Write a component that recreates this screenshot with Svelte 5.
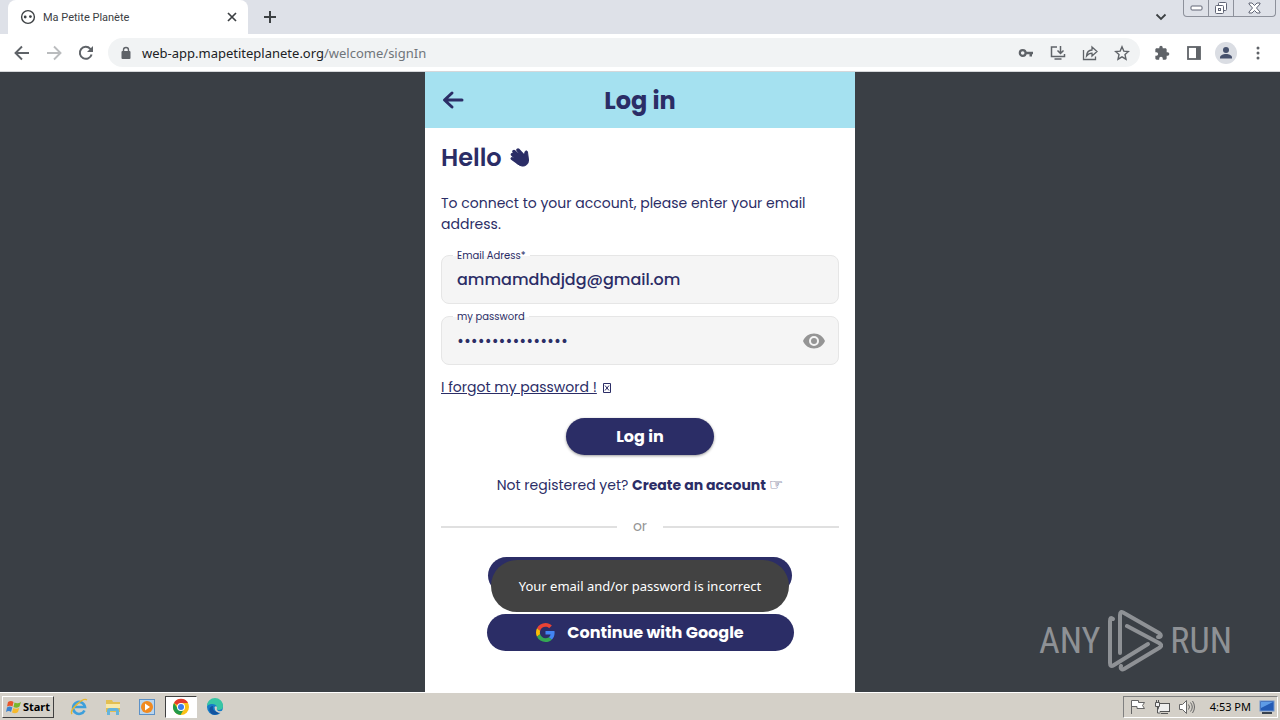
<script lang="ts">
    let email = $state("ammamdhdjdg@gmail.om");
    let password = $state("planetplanet2023");
    let showPassword = $state(false);
    let message = $state("Your email and/or password is incorrect");
</script>

<div class="screen">
    <header class="browser">
        <div class="tabs">
            <div class="tab">
                <svg width="16" height="16" viewBox="0 0 16 16">
                    <circle cx="8" cy="8" r="6.4" fill="#fff" stroke="#3c4043" stroke-width="1.4" />
                    <circle cx="5.2" cy="8" r="1.4" fill="#3c4043" />
                    <circle cx="10.4" cy="7.6" r="1.4" fill="#3c4043" />
                </svg>
                <span class="tab-title">Ma Petite Planète</span>
                <button aria-label="Close tab">
                    <svg width="10" height="10" viewBox="0 0 10 10" stroke="#3c4043" stroke-width="1.7">
                        <path d="M1 1l8 8M9 1l-8 8" />
                    </svg>
                </button>
            </div>
            <button class="new-tab" aria-label="New tab">
                <svg width="12" height="12" viewBox="0 0 12 12" stroke="#3c4043" stroke-width="2">
                    <path d="M6 0v12M0 6h12" />
                </svg>
            </button>
            <button class="tab-search" aria-label="Search tabs">
                <svg width="12" height="8" viewBox="0 0 12 8" fill="none" stroke="#3c4043" stroke-width="1.8">
                    <path d="M1.5 1.5L6 6l4.5-4.5" />
                </svg>
            </button>
            <div class="window-buttons">
                <button aria-label="Minimize">
                    <svg width="13" height="6" viewBox="0 0 13 6" fill="#fff" stroke="#606575">
                        <rect x="1" y="1" width="11" height="4" rx="1" />
                    </svg>
                </button>
                <button aria-label="Restore">
                    <svg width="14" height="13" viewBox="0 0 14 13" fill="#fff" stroke="#606575">
                        <rect x="4.5" y="0.5" width="8" height="8" rx="1" />
                        <rect x="1.5" y="3.5" width="8" height="8" rx="1" />
                        <rect x="4.5" y="6.5" width="2" height="2" />
                    </svg>
                </button>
                <button class="close" aria-label="Close">
                    <svg width="13" height="12" viewBox="0 0 13 12" fill="#fff" stroke="#606575">
                        <path d="M1 1h3l2.5 2.5L9 1h3v1L8.5 6l3.5 4v1H9L6.5 8.5 4 11H1v-1l3.5-4L1 2z" />
                    </svg>
                </button>
            </div>
        </div>

        <nav class="toolbar">
            <button aria-label="Back">
                <svg width="16" height="16" viewBox="0 0 16 16" fill="none" stroke="#5f6368" stroke-width="1.9">
                    <path d="M15 8H2M8 1.5L1.5 8 8 14.5" />
                </svg>
            </button>
            <button aria-label="Forward">
                <svg width="16" height="16" viewBox="0 0 16 16" fill="none" stroke="#babcbe" stroke-width="1.9">
                    <path d="M1 8h13M8 1.5L14.5 8 8 14.5" />
                </svg>
            </button>
            <button aria-label="Reload">
                <svg width="16" height="16" viewBox="0 0 16 16">
                    <path d="M13.6 9.5A6 6 0 1 1 12.3 3.8L14 5.5" fill="none" stroke="#5f6368" stroke-width="2" />
                    <path d="M15 1v6H9z" fill="#5f6368" />
                </svg>
            </button>
            <div class="address">
                <svg width="12" height="14" viewBox="0 0 12 14">
                    <rect x="1.5" y="5" width="9" height="8" rx="1" fill="#5f6368" />
                    <path d="M3.5 5.5V4a2.5 2.5 0 0 1 5 0v1.5" fill="none" stroke="#5f6368" stroke-width="1.4" />
                </svg>
                <span class="url">web-app.mapetiteplanete.org<span>/welcome/signIn</span></span>
                <button aria-label="Saved passwords">
                    <svg width="16" height="16" viewBox="0 0 16 16">
                        <circle cx="4.7" cy="8" r="2.9" fill="none" stroke="#5f6368" stroke-width="2.2" />
                        <path d="M7 6.8h8v2.4h-1v2.3h-2.5V9.200H7z" fill="#5f6368" />
                    </svg>
                </button>
                <button aria-label="Install app">
                    <svg width="16" height="16" viewBox="0 0 16 16" fill="none" stroke="#5f6368" stroke-width="1.5">
                        <path d="M7 2H1.5v9.5h13V9M4.5 14h7M10.5 1v7M7.5 5.5l3 3 3-3" />
                    </svg>
                </button>
                <button aria-label="Share">
                    <svg width="16" height="16" viewBox="0 0 16 16" fill="none" stroke="#5f6368" stroke-width="1.3">
                        <path d="M1.5 5v9.500h12v-3" />
                        <path d="M4.5 11c.3-4 2.2-5.8 5.5-6V2l5 4.5-5 4.5V8.200c-2.500 0-4 .8-5.500 2.800z" />
                    </svg>
                </button>
                <button aria-label="Bookmark">
                    <svg width="16" height="16" viewBox="0 0 16 16" fill="none" stroke="#5f6368" stroke-width="1.4">
                        <path d="M8 1.800l1.800 4.300 4.700.4-3.500 3.100 1 4.600L8 11.800l-4 2.400 1-4.600-3.500-3.100 4.700-.4z" />
                    </svg>
                </button>
            </div>
            <button aria-label="Extensions">
                <svg width="16" height="16" viewBox="0 0 24 24" fill="#5f6368">
                    <path d="M20.5 11H19V7c0-1.100-.9-2-2-2h-4V3.500a2.500 2.500 0 0 0-5 0V5H4c-1.100 0-2 .9-2 2v3.800h1.500a2.700 2.700 0 0 1 0 5.400H2V20c0 1.100.9 2 2 2h3.800v-1.500a2.700 2.700 0 0 1 5.400 0V22H17c1.100 0 2-.9 2-2v-4h1.500a2.500 2.500 0 0 0 0-5z" />
                </svg>
            </button>
            <button aria-label="Side panel">
                <svg width="14" height="14" viewBox="0 0 14 14">
                    <rect x="1" y="1" width="12" height="12" fill="#fff" stroke="#5f6368" stroke-width="1.8" />
                    <rect x="9" y="1" width="4" height="12" fill="#5f6368" />
                </svg>
            </button>
            <button aria-label="Profile">
                <svg width="22" height="22" viewBox="0 0 22 22">
                    <circle cx="11" cy="11" r="11" fill="#dadde3" />
                    <circle cx="11" cy="8" r="3" fill="#46516d" />
                    <path d="M5 16.5v-1c0-2.200 3-3.500 6-3.500s6 1.300 6 3.500v1z" fill="#46516d" />
                </svg>
            </button>
            <button aria-label="Menu">
                <svg width="4" height="14" viewBox="0 0 4 14" fill="#5f6368">
                    <circle cx="2" cy="2" r="1.5" /><circle cx="2" cy="7" r="1.5" /><circle cx="2" cy="12" r="1.5" />
                </svg>
            </button>
        </nav>
    </header>

    <div class="backdrop">
        <main class="app">
            <header class="app-bar">
                <button aria-label="Go back">
                    <svg width="22" height="20" viewBox="0 0 22 20" fill="none" stroke="#2b2d66" stroke-width="3" stroke-linecap="round" stroke-linejoin="round">
                        <path d="M20 10H3M10 3l-7.500 7 7.500 7" />
                    </svg>
                </button>
                <h1>Log in</h1>
            </header>

            <form class="content" onsubmit={(e) => e.preventDefault()}>
                <h2>
                    Hello
                    <svg width="20" height="20" viewBox="0 0 20 20" fill="none" stroke="#2b2d66" stroke-linecap="round">
                        <path d="M2.500 6.500l6 6M4 3.500l8 8M8 2l7 7.500" stroke-width="3.500" />
                        <path d="M2 10.500l7 5" stroke-width="3" />
                        <path d="M8 5l6 4 1-5c.2-1.500 2.300-1.500 2.500 0l1 8c.2 4-3 6.500-6.500 6-3-.4-5-2.500-8-6z" fill="#2b2d66" stroke-width="1" />
                    </svg>
                </h2>
                <p class="intro">To connect to your account, please enter your email address.</p>

                <div class="field">
                    <label for="email">Email Adress*</label>
                    <input id="email" type="text" bind:value={email} />
                </div>
                <div class="field">
                    <label for="password">my password</label>
                    <input id="password" class:masked={!showPassword} type={showPassword ? "text" : "password"} bind:value={password} />
                    <button type="button" aria-label="Show password" onclick={() => (showPassword = !showPassword)}>
                        <svg width="24" height="24" viewBox="0 0 24 24" fill="#959595">
                            <path d="M12 4.500C7 4.500 2.730 7.610 1 12c1.730 4.390 6 7.500 11 7.500s9.270-3.110 11-7.500c-1.730-4.390-6-7.500-11-7.500zM12 17a5 5 0 1 1 0-10 5 5 0 0 1 0 10zm0-8a3 3 0 1 0 0 6 3 3 0 0 0 0-6z" />
                        </svg>
                    </button>
                </div>

                <div class="forgot">
                    <a href="#forgot">I forgot my password !</a>
                    <svg width="8" height="10" viewBox="0 0 8 10" fill="none" stroke="#2b2d66">
                        <path d="M.5.500h7v9h-7zM2 2.500l4 5M6 2.500l-4 5" />
                    </svg>
                </div>

                <button class="pill login">Log in</button>

                <p class="register">Not registered yet? <a href="#register">Create an account <span>☞</span></a></p>

                <div class="divider"><span>or</span></div>

                <div class="providers">
                    <button type="button" class="pill facebook" aria-label="Continue with Facebook"></button>
                    <button type="button" class="pill google">
                        <svg width="19" height="19" viewBox="0 0 48 48">
                            <path fill="#ea4335" d="M24 9.500c3.540 0 6.710 1.220 9.210 3.600l6.850-6.850C35.900 2.380 30.470 0 24 0 14.620 0 6.510 5.380 2.560 13.220l7.980 6.190C12.430 13.720 17.740 9.500 24 9.500z" />
                            <path fill="#4285f4" d="M46.980 24.550c0-1.570-.15-3.090-.38-4.550H24v9.020h12.940c-.58 2.960-2.260 5.480-4.780 7.180l7.730 6c4.510-4.180 7.090-10.360 7.090-17.650z" />
                            <path fill="#fbbc05" d="M10.530 28.590c-.48-1.450-.76-2.990-.76-4.590s.27-3.140.76-4.590l-7.980-6.190C.920 16.460 0 20.120 0 24c0 3.880.92 7.540 2.560 10.780l7.970-6.190z" />
                            <path fill="#34a853" d="M24 48c6.480 0 11.930-2.130 15.890-5.810l-7.730-6c-2.150 1.450-4.920 2.300-8.160 2.300-6.260 0-11.570-4.220-13.470-9.910l-7.980 6.190C6.510 42.620 14.620 48 24 48z" />
                        </svg>
                        Continue with Google
                    </button>
                    {#if message}
                        <div class="toast" role="alert">{message}</div>
                    {/if}
                </div>
            </form>
        </main>

        <div class="watermark">
            <span>ANY</span>
            <svg width="56" height="62" viewBox="0 0 56 62" fill="none" stroke="#8e9195" stroke-width="4" stroke-linecap="round" stroke-linejoin="round">
                <path d="M6 9C4 7 3 8 3 11v42c0 3 1 4 4 2l34-21" />
                <path d="M13 43V5c0-3 1-4 4-2l35 20c3 2 2 4-1 4" />
                <path d="M20 16l32 17c3 2 3 3 0 5L17 59c-2 1-4 0-3-3" />
            </svg>
            <span>RUN</span>
        </div>
    </div>

    <footer class="taskbar">
        <button class="start">
            <svg width="16" height="16" viewBox="0 0 16 16">
                <path d="M2 3c2-1.500 4-1.500 5.500 0L6.500 7.500C5 6.500 3 6.500 1 7.500z" fill="#e8562a" />
                <path d="M8.500 3.500c2 1 4 1 6.500-.5l-1.500 4.500c-2 1.500-4 1.500-6 .5z" fill="#79b72a" />
                <path d="M1 8.500c2-1.200 3.500-1.200 5.300 0L5 13c-1.500-1.200-3-1.200-5 0z" fill="#3b83cf" />
                <path d="M7.300 9c2 1 4 1 6-.3L12 13c-2 1.500-4 1.500-6 .5z" fill="#f6b92c" />
            </svg>
            Start
        </button>
        <button class="task" aria-label="Internet Explorer">
            <svg width="18" height="18" viewBox="0 0 18 18" fill="none">
                <path d="M14.500 12.500A6 6 0 1 1 15 9H5" stroke="#3d9fdb" stroke-width="2.600" />
                <path d="M2 16C-1 12 13-1 17 2" stroke="#e7b72f" stroke-width="1.400" />
            </svg>
        </button>
        <button class="task" aria-label="Explorer">
            <svg width="18" height="18" viewBox="0 0 18 18">
                <path d="M2 2h6l1 2h7v10H2z" fill="#e3bf52" />
                <path d="M2 6h14v4H2z" fill="#f9e9a8" />
                <path d="M3 17v-4q0-3 3-3h6q3 0 3 3v4h-3v-4H6v4z" fill="#65b4dc" />
            </svg>
        </button>
        <button class="task" aria-label="Media Player">
            <svg width="18" height="18" viewBox="0 0 18 18">
                <rect x="1.5" y="1.5" width="15" height="15" fill="#b9d5ee" stroke="#5c91c7" />
                <circle cx="9" cy="9" r="6" fill="#f18a20" />
                <path d="M7 5.500v7l5-3.500z" fill="#fff" />
            </svg>
        </button>
        <button class="task active" aria-label="Chrome">
            <svg width="18" height="18" viewBox="0 0 18 18">
                <circle cx="9" cy="9" r="8" fill="#fbc116" />
                <path d="M9 9L2 5A8 8 0 0 1 16 5H9z" fill="#e33b2e" />
                <path d="M2 5a8 8 0 0 0 6.500 12L12 11 6 11z" fill="#229a4a" />
                <circle cx="9" cy="9" r="4" fill="#fff" />
                <circle cx="9" cy="9" r="3" fill="#3b7ded" />
            </svg>
        </button>
        <button class="task" aria-label="Edge">
            <svg width="18" height="18" viewBox="0 0 18 18">
                <circle cx="9" cy="9" r="8" fill="#167dc7" />
                <path d="M1 8a8 8 0 0 1 16 0c0 3-2 4-4.500 4S10 11 11 9.500C11 6 5 4.500 1 8z" fill="#38c6a4" />
                <path d="M7 8c-1 4 2 6.500 7.500 6-3 3.500-10 4-11-1.500C3 9.500 5 8 7 8z" fill="#1253a0" />
                <path d="M8.500 9q2-1.500 2.500.500-1 2 1 3.500 3 .5 5-.5-.5 1.500-1.500 2.500-7 0-7-6z" fill="#d4d0c8" />
            </svg>
        </button>
        <div class="tray">
            <svg width="16" height="16" viewBox="0 0 16 16" fill="#fff" stroke="#666">
                <path d="M1.500 15V1.500h7v2h6l-2 3 2 3H7v-2H2" />
            </svg>
            <svg width="16" height="16" viewBox="0 0 16 16" fill="#eee" stroke="#555">
                <rect x="4.5" y="4.5" width="11" height="8" />
                <path d="M7 14.500h7M1.500 3.500h4v4h-4zM2.500 1v2M4.500 1v2M3.500 8v6h3" />
            </svg>
            <svg width="17" height="16" viewBox="0 0 17 16" fill="none" stroke="#666">
                <path d="M1.500 5.500h3l4-4v13l-4-4h-3z" fill="#fff" />
                <path d="M10.500 5.500q2 2.500 0 5M12.500 3.500q3.500 4.500 0 9M14.500 2q4 6 0 12" />
            </svg>
            <time>4:53 PM</time>
            <svg width="16" height="14" viewBox="0 0 16 14">
                <rect x="1" y="1" width="14" height="10" fill="#245bb5" stroke="#6f94cc" />
                <path d="M2 2h12L2 8z" fill="#5e9be6" />
                <rect x="3" y="12" width="10" height="2" fill="#39424e" />
            </svg>
        </div>
    </footer>
</div>

<style>
    :global(body) {
        background: #3a3f45;
    }

    .screen {
        display: flex;
        flex-direction: column;
        min-height: 100vh;
        font-family: "Noto Sans", sans-serif;
        font-size: 11px;
        color: #3c4043;
    }
    .screen * {
        box-sizing: border-box;
    }
    svg {
        display: block;
        flex: none;
    }
    button {
        display: flex;
        align-items: center;
        justify-content: center;
        padding: 0;
        border: none;
        background: none;
        font: inherit;
        color: inherit;
        cursor: pointer;
    }
    h1,
    h2,
    p {
        margin: 0;
    }

    .tabs {
        display: flex;
        height: 34px;
        padding-left: 8px;
        background: #dee1e8;
    }
    .tab {
        display: flex;
        align-items: center;
        gap: 7px;
        width: 240px;
        padding: 0 11px 0 12px;
        border-radius: 8px 8px 0 0;
        background: #fff;
    }
    .tab-title {
        flex: 1;
        font-family: Roboto, sans-serif;
    }
    .new-tab {
        width: 44px;
    }
    .tab-search {
        width: 44px;
        margin-left: auto;
    }
    .window-buttons {
        display: flex;
        height: 17px;
        margin-right: 4px;
        border: 1px solid #8d919b;
        border-top: none;
        border-radius: 0 0 4px 4px;
    }
    .window-buttons button {
        width: 25px;
        border-right: 1px solid #8d919b;
    }
    .window-buttons .close {
        width: 41px;
        border-right: none;
    }

    .toolbar {
        display: flex;
        align-items: center;
        height: 38px;
        padding: 0 6px;
        border-bottom: 1px solid #d5d7da;
        background: #fff;
    }
    .toolbar button {
        width: 32px;
        height: 28px;
    }
    .address {
        display: flex;
        flex: 1;
        align-items: center;
        height: 29px;
        margin: 0 6px;
        padding: 0 2px 0 12px;
        border-radius: 15px;
        background: #f1f3f4;
    }
    .url {
        flex: 1;
        margin-left: 10px;
        font-size: 13px;
        color: #202124;
    }
    .url span {
        color: #70757a;
    }

    .backdrop {
        position: relative;
        display: flex;
        flex: 1;
        justify-content: center;
        background: #3a3f45;
    }
    .app {
        width: 100%;
        max-width: 430px;
        background: #fff;
        color: #2b2d66;
        font-family: Poppins, Inter, sans-serif;
        font-size: 14px;
    }
    .app-bar {
        display: grid;
        grid-template-columns: 24px 1fr 24px;
        align-items: center;
        height: 56px;
        padding: 0 16px;
        background: #a5e1f0;
    }
    h1 {
        font-size: 24px;
        font-weight: 700;
        text-align: center;
    }

    .content {
        display: flex;
        flex-direction: column;
        padding: 12px 16px 40px;
    }
    h2 {
        display: flex;
        align-items: center;
        gap: 8px;
        font-size: 24px;
        line-height: 36px;
        font-weight: 600;
    }
    .intro {
        margin: 17px 0 20px;
        line-height: 21px;
    }
    .field {
        position: relative;
        display: flex;
        align-items: center;
        height: 49px;
        margin-bottom: 12px;
        padding: 0 12px 0 15px;
        border: 1px solid #e6e6e6;
        border-radius: 8px;
        background: #f5f5f5;
    }
    .field label {
        position: absolute;
        top: -8px;
        left: 11px;
        padding: 0 4px;
        background: linear-gradient(#fff 50%, #f5f5f5 50%);
        font-size: 10px;
        line-height: 16px;
    }
    .field input {
        flex: 1;
        min-width: 0;
        padding: 0;
        border: none;
        outline: none;
        background: none;
        font: inherit;
        font-size: 16px;
        font-weight: 500;
        color: inherit;
    }
    .field .masked {
        font-size: 15px;
    }

    .forgot {
        display: flex;
        align-items: center;
        gap: 6px;
        line-height: 21px;
    }
    a {
        color: inherit;
    }
    .pill {
        align-self: center;
        height: 37px;
        border-radius: 20px;
        background: #2b2d66;
        color: #fff;
        font-size: 16px;
        font-weight: 700;
    }
    .login {
        width: 148px;
        margin: 20px 0;
        box-shadow: 0 1px 3px rgba(0, 0, 0, 0.4);
    }
    .register {
        line-height: 21px;
        text-align: center;
    }
    .register a {
        font-weight: 700;
        text-decoration: none;
    }
    .register span {
        font-family: "DejaVu Sans", sans-serif;
        font-size: 16px;
        font-weight: 400;
        line-height: 1;
    }
    .divider {
        display: flex;
        align-items: center;
        gap: 16px;
        margin: 20px 0;
        line-height: 21px;
        color: #959595;
    }
    .divider::before,
    .divider::after {
        content: "";
        flex: 1;
        height: 2px;
        background: #e0e0e0;
    }

    .providers {
        position: relative;
        display: flex;
        flex-direction: column;
        align-items: center;
        gap: 20px;
    }
    .facebook {
        width: 304px;
    }
    .google {
        gap: 12px;
        width: 307px;
    }
    .toast {
        position: absolute;
        top: 3px;
        display: flex;
        align-items: center;
        justify-content: center;
        width: 298px;
        height: 52px;
        border-radius: 26px;
        background: #424242;
        color: #fff;
        font-size: 13px;
        font-family: "Noto Sans", sans-serif;
    }

    .watermark {
        position: absolute;
        right: 48px;
        bottom: 20px;
        display: flex;
        align-items: center;
        gap: 7px;
        color: #8e9195;
        font-family: "Liberation Sans Narrow", "Roboto Condensed", Roboto, sans-serif;
        font-size: 36px;
    }

    .taskbar {
        display: flex;
        align-items: center;
        height: 28px;
        padding: 0 2px;
        border-top: 1px solid #fff;
        background: #d4d0c8;
        color: #000;
    }
    .start {
        gap: 1px;
        width: 52px;
        height: 22px;
        margin-right: 9px;
        border: 1px solid;
        border-color: #fff #404040 #404040 #fff;
        font-weight: 700;
    }
    .task {
        width: 32px;
        height: 22px;
        margin-right: 2px;
    }
    .task.active {
        border: 1px solid;
        border-color: #404040 #fff #fff #404040;
        background: #fff;
    }
    .tray {
        display: flex;
        align-items: center;
        gap: 8px;
        height: 22px;
        margin-left: auto;
        padding: 0 2px 0 6px;
        border: 1px solid;
        border-color: #808080 #fff #fff #808080;
    }
    .tray time {
        margin: 0 0 0 7px;
    }
</style>
